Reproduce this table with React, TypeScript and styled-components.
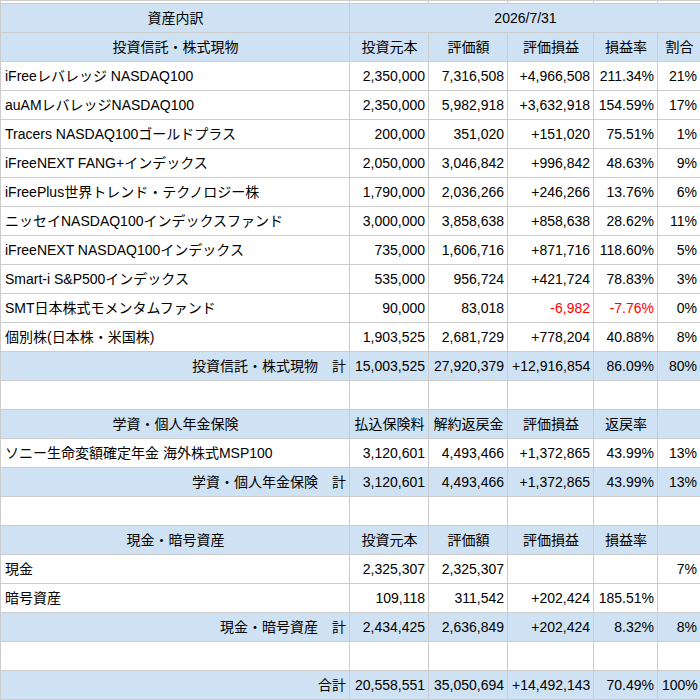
import styled, { createGlobalStyle } from "styled-components";

const GlobalStyle = createGlobalStyle`
  * { margin: 0; padding: 0; box-sizing: border-box; }
  body {
    background: #ffffff;
    overflow: hidden;
    font-family: "Liberation Sans", Arial, "Noto Sans CJK JP", sans-serif;
  }
`;

const Sheet = styled.table`
  border-collapse: collapse;
  table-layout: fixed;
  width: 700px;
  font-size: 14px;
  color: #000;
`;

const Row = styled.tr<{ $h?: number }>`
  height: ${(p) => p.$h ?? 29}px;
`;

const Cell = styled.td<{ $align?: "left" | "center" | "right"; $blue?: boolean; $red?: boolean }>`
  border: 1px solid #cccccc;
  background: ${(p) => (p.$blue ? "#cfe2f3" : "#ffffff")};
  color: ${(p) => (p.$red ? "#ff0000" : "#000000")};
  text-align: ${(p) => p.$align ?? "right"};
  padding: 0 3px 0 4px;
  white-space: nowrap;
  overflow: hidden;
  vertical-align: middle;
  line-height: 16px;
`;

type Item = [string, string, string, string, string, string];

const stocks: Item[] = [
  ["iFreeレバレッジ NASDAQ100", "2,350,000", "7,316,508", "+4,966,508", "211.34%", "21%"],
  ["auAMレバレッジNASDAQ100", "2,350,000", "5,982,918", "+3,632,918", "154.59%", "17%"],
  ["Tracers NASDAQ100ゴールドプラス", "200,000", "351,020", "+151,020", "75.51%", "1%"],
  ["iFreeNEXT FANG+インデックス", "2,050,000", "3,046,842", "+996,842", "48.63%", "9%"],
  ["iFreePlus世界トレンド・テクノロジー株", "1,790,000", "2,036,266", "+246,266", "13.76%", "6%"],
  ["ニッセイNASDAQ100インデックスファンド", "3,000,000", "3,858,638", "+858,638", "28.62%", "11%"],
  ["iFreeNEXT NASDAQ100インデックス", "735,000", "1,606,716", "+871,716", "118.60%", "5%"],
  ["Smart-i S&P500インデックス", "535,000", "956,724", "+421,724", "78.83%", "3%"],
  ["SMT日本株式モメンタムファンド", "90,000", "83,018", "-6,982", "-7.76%", "0%"],
  ["個別株(日本株・米国株)", "1,903,525", "2,681,729", "+778,204", "40.88%", "8%"],
];

const insurance: Item[] = [
  ["ソニー生命変額確定年金 海外株式MSP100", "3,120,601", "4,493,466", "+1,372,865", "43.99%", "13%"],
];

const cash: Item[] = [
  ["現金", "2,325,307", "2,325,307", "", "", "7%"],
  ["暗号資産", "109,118", "311,542", "+202,424", "185.51%", ""],
];

const Blank = ({ h }: { h?: number }) => (
  <Row $h={h}>
    {[0, 1, 2, 3, 4, 5].map((i) => (
      <Cell key={i} />
    ))}
  </Row>
);

const Head = ({ cols }: { cols: string[] }) => (
  <Row>
    {cols.map((c, i) => (
      <Cell key={i} $blue $align="center">
        {c}
      </Cell>
    ))}
  </Row>
);

const ItemRow = ({ item }: { item: Item }) => (
  <Row>
    {item.map((v, i) => (
      <Cell key={i} $align={i === 0 ? "left" : "right"} $red={v.startsWith("-")}>
        {v}
      </Cell>
    ))}
  </Row>
);

const Total = ({ item }: { item: Item }) => (
  <Row>
    {item.map((v, i) => (
      <Cell key={i} $blue $align="right">
        {v}
      </Cell>
    ))}
  </Row>
);

const App = () => (
  <>
    <GlobalStyle />
    <Sheet>
      <colgroup>
        <col style={{ width: 349 }} />
        <col style={{ width: 79 }} />
        <col style={{ width: 79 }} />
        <col style={{ width: 86 }} />
        <col style={{ width: 64 }} />
        <col style={{ width: 43 }} />
      </colgroup>
      <tbody>
        <Blank h={3} />
        <Row>
          <Cell $blue $align="center">資産内訳</Cell>
          <Cell $blue $align="center" colSpan={5}>2026/7/31</Cell>
        </Row>
        <Head cols={["投資信託・株式現物", "投資元本", "評価額", "評価損益", "損益率", "割合"]} />
        {stocks.map((s) => (
          <ItemRow key={s[0]} item={s} />
        ))}
        <Total item={["投資信託・株式現物　計", "15,003,525", "27,920,379", "+12,916,854", "86.09%", "80%"]} />
        <Blank />
        <Head cols={["学資・個人年金保険", "払込保険料", "解約返戻金", "評価損益", "返戻率", ""]} />
        {insurance.map((s) => (
          <ItemRow key={s[0]} item={s} />
        ))}
        <Total item={["学資・個人年金保険　計", "3,120,601", "4,493,466", "+1,372,865", "43.99%", "13%"]} />
        <Blank />
        <Head cols={["現金・暗号資産", "投資元本", "評価額", "評価損益", "損益率", ""]} />
        {cash.map((s) => (
          <ItemRow key={s[0]} item={s} />
        ))}
        <Total item={["現金・暗号資産　計", "2,434,425", "2,636,849", "+202,424", "8.32%", "8%"]} />
        <Blank />
        <Total item={["合計", "20,558,551", "35,050,694", "+14,492,143", "70.49%", "100%"]} />
      </tbody>
    </Sheet>
  </>
);

export default App;
